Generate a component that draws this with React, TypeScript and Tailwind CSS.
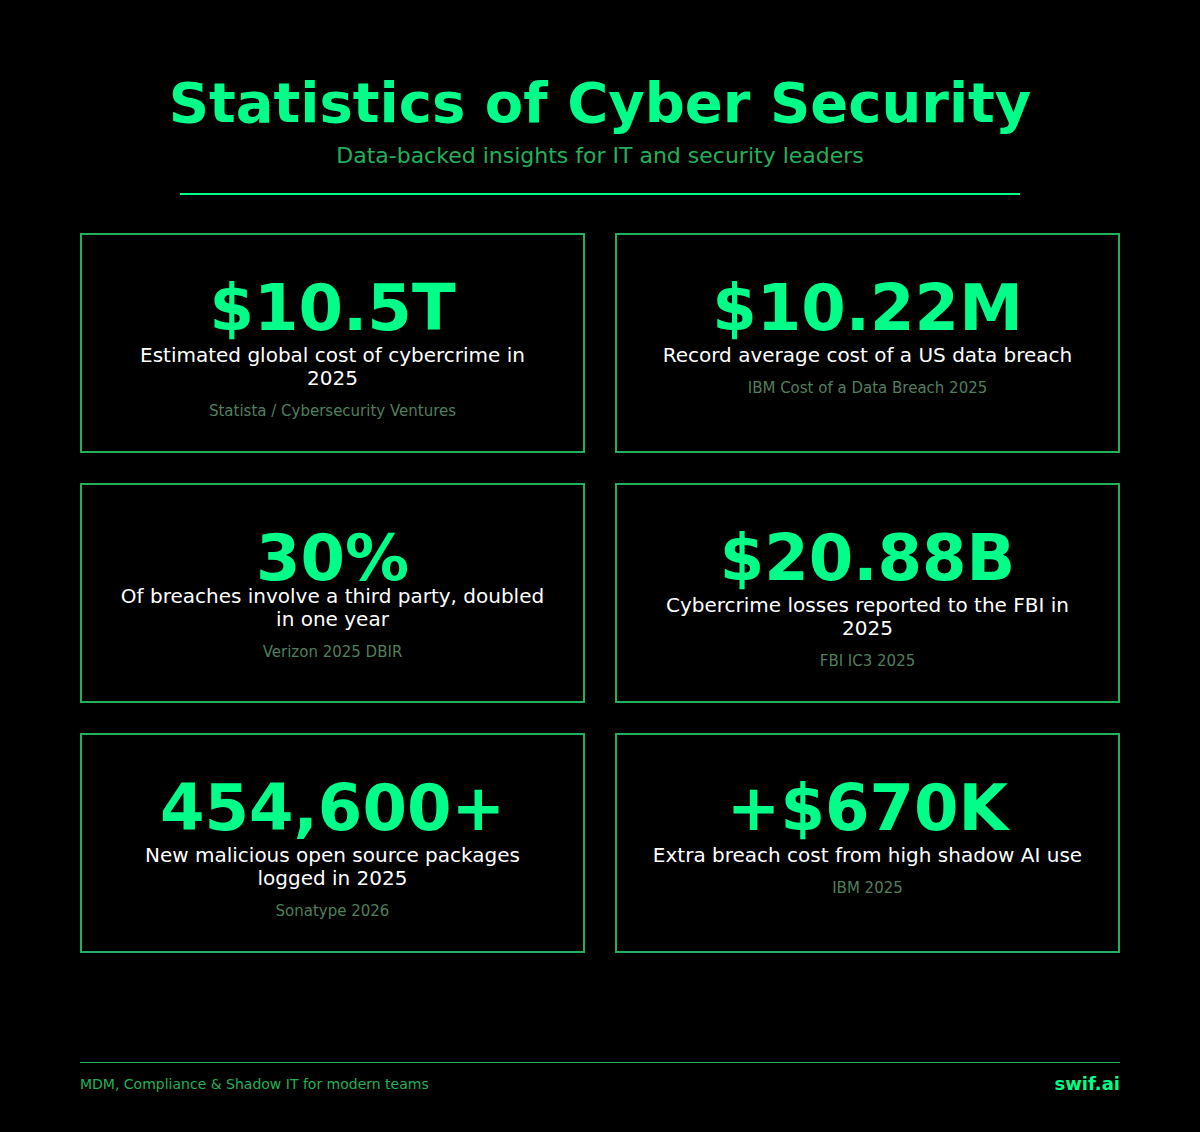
import React from "react";

type Stat = { value: string; desc: string; source: string; tight?: boolean };

const stats: Stat[] = [
  { value: "$10.5T", desc: "Estimated global cost of cybercrime in 2025", source: "Statista / Cybersecurity Ventures" },
  { value: "$10.22M", desc: "Record average cost of a US data breach", source: "IBM Cost of a Data Breach 2025" },
  { value: "30%", desc: "Of breaches involve a third party, doubled in one year", source: "Verizon 2025 DBIR", tight: true },
  { value: "$20.88B", desc: "Cybercrime losses reported to the FBI in 2025", source: "FBI IC3 2025" },
  { value: "454,600+", desc: "New malicious open source packages logged in 2025", source: "Sonatype 2026" },
  { value: "+$670K", desc: "Extra breach cost from high shadow AI use", source: "IBM 2025" },
];

function Card({ s }: { s: Stat }) {
  return (
    <div className="h-[220px] border-2 border-[#22b05a] px-[30px] pt-[41px] flex flex-col items-center text-center">
      <div
        className={`${s.tight ? "mt-[6px] leading-[52px]" : "leading-none"} text-[64px] font-bold text-[#00ff88]`}
      >
        {s.value}
      </div>
      <div className={`${s.tight ? "mt-[1px]" : "mt-[4px]"} text-[20px] leading-[23px] text-white`}>{s.desc}</div>
      <div className="mt-[11px] text-[15px] leading-[20px] text-[#4f7f5f]">{s.source}</div>
    </div>
  );
}

export default function App() {
  return (
    <div
      className="w-[1200px] h-[1132px] bg-black flex flex-col items-center"
      style={{ fontFamily: '"DejaVu Sans", sans-serif' }}
    >
      <h1 className="mt-[69px] text-[56px] leading-[67px] font-bold text-[#00ff88]">Statistics of Cyber Security</h1>
      <p className="mt-[7px] text-[22px] leading-[26px] text-[#22b05a]">Data-backed insights for IT and security leaders</p>
      <div className="mt-[24px] w-[840px] h-[2px] bg-[#00ff88]" />
      <div className="mt-[38px] w-[1040px] grid grid-cols-2 gap-[30px]">
        {stats.map((s) => (
          <Card key={s.value} s={s} />
        ))}
      </div>
      <div className="mt-[109px] w-[1040px] border-t border-[#22b05a] pt-[11px] flex items-center justify-between">
        <span className="text-[14px] leading-[20px] text-[#22b05a]">MDM, Compliance &amp; Shadow IT for modern teams</span>
        <span className="text-[18px] leading-[20px] font-bold text-[#00ff88]">swif.ai</span>
      </div>
    </div>
  );
}
